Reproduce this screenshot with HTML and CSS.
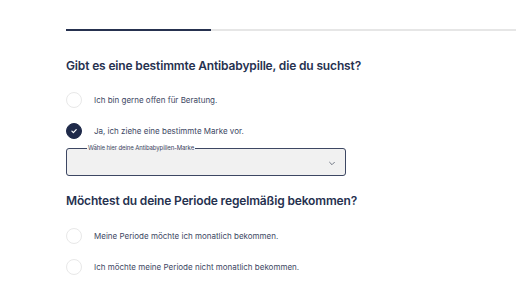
FILE: index.html
```html
<!DOCTYPE html>
<html lang="de">
<head>
    <meta charset="UTF-8">
    <meta name="viewport" content="width=device-width, initial-scale=1.0">
    <title>Fragebogen</title>
    <link rel="stylesheet" href="styles.css">
</head>
<body>
    <div class="progress">
        <div class="progress-fill"></div>
    </div>

    <div class="quiz">
        <section class="question">
            <h2 class="question-title">Gibt es eine bestimmte Antibabypille, die du suchst?</h2>
            <label class="option">
                <span class="radio"></span>
                <span class="option-text">Ich bin gerne offen für Beratung.</span>
            </label>
            <label class="option">
                <span class="radio radio-checked">
                    <svg viewBox="0 0 16 16" class="check" fill="none" stroke="white" stroke-width="1.4">
                        <path stroke-linecap="round" stroke-linejoin="round" d="M5.6 8.2l1.7 1.6 3.2-3.3" />
                    </svg>
                </span>
                <span class="option-text">Ja, ich ziehe eine bestimmte Marke vor.</span>
            </label>
            <fieldset class="select-box">
                <legend>Wähle hier deine Antibabypillen-Marke</legend>
                <svg viewBox="0 0 10 6" class="chevron" fill="none" stroke="#6b7280" stroke-width="1.2">
                    <path stroke-linecap="round" stroke-linejoin="round" d="M2 1.5l3 3 3-3" />
                </svg>
            </fieldset>
        </section>

        <section class="question">
            <h2 class="question-title">Möchtest du deine Periode regelmäßig bekommen?</h2>
            <label class="option">
                <span class="radio"></span>
                <span class="option-text">Meine Periode möchte ich monatlich bekommen.</span>
            </label>
            <label class="option">
                <span class="radio"></span>
                <span class="option-text">Ich möchte meine Periode nicht monatlich bekommen.</span>
            </label>
        </section>
    </div>
</body>
</html>
```

FILE: styles.css
```css
* {
    margin: 0;
    padding: 0;
    box-sizing: border-box;
    font-family: Inter, "Noto Sans", sans-serif;
}

body {
    background: #fff;
    color: #26314f;
    overflow: hidden;
}

.progress {
    margin: 29px 0 0 66px;
    height: 2px;
    background: #e6e6e6;
}

.progress-fill {
    width: 145px;
    height: 100%;
    background: #26314f;
}

.quiz {
    padding-left: 66px;
}

.question {
    display: flex;
    flex-direction: column;
}

.question-title {
    font-size: 12px;
    font-weight: 600;
    letter-spacing: -0.15px;
    white-space: nowrap;
    margin-top: 27px;
    margin-bottom: 18px;
    line-height: 16px;
}

.question + .question .question-title {
    margin-top: 17px;
    margin-bottom: 19px;
}

.option {
    display: flex;
    align-items: center;
    gap: 12px;
    height: 16px;
    margin-bottom: 15px;
}

.radio {
    width: 16px;
    height: 16px;
    border-radius: 50%;
    border: 1px solid #e8e8e8;
    display: flex;
    align-items: center;
    justify-content: center;
    flex-shrink: 0;
}

.radio-checked {
    background: #1f2a4a;
    border-color: #1f2a4a;
}

.check {
    width: 16px;
    height: 16px;
}

.option-text {
    font-size: 8px;
    color: #3d4763;
}

.select-box {
    width: 280px;
    margin-top: -9px;
    height: 31px;
    border: 1.5px solid #3d4763;
    border-radius: 3px;
    background: #f1f1f1;
    padding: 0 9px 0 20px;
    display: flex;
    align-items: flex-start;
    justify-content: flex-end;
}

.select-box legend {
    font-size: 6px;
    letter-spacing: -0.1px;
    color: #3d4763;
    padding: 0 1px;
    line-height: 6px;
}

.chevron {
    width: 8px;
    height: 5px;
    margin-top: 10px;
}
```
